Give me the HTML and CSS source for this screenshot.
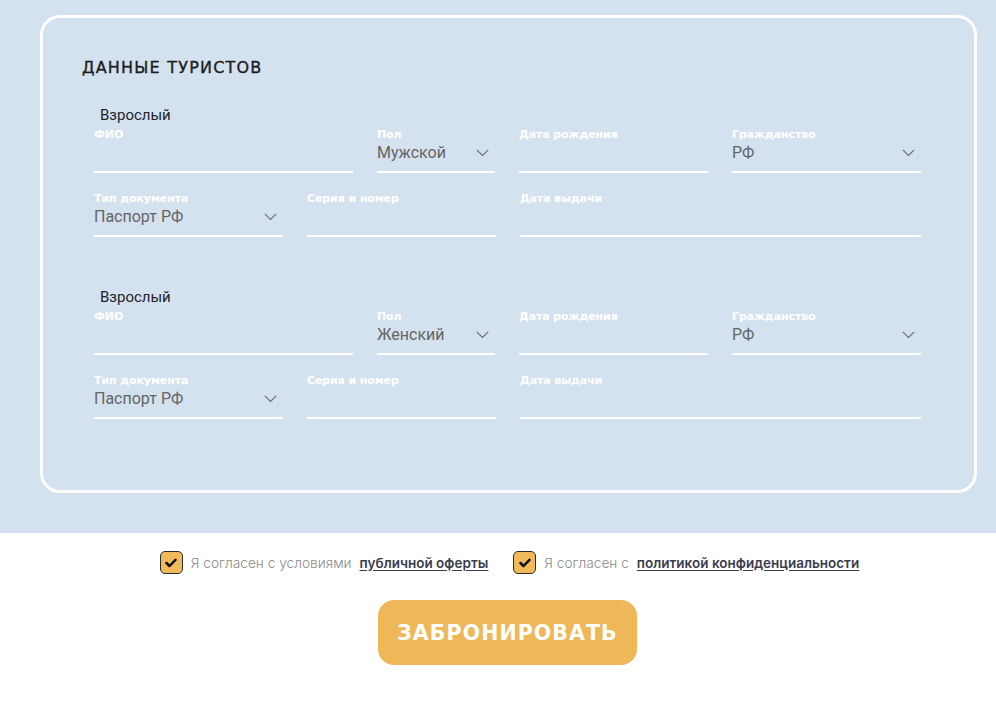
FILE: index.html
```html
<!DOCTYPE html>
<html lang="ru">
<head>
<meta charset="utf-8">
<title>Данные туристов</title>
<link rel="stylesheet" href="styles.css">
</head>
<body>
<div class="hero">
  <section class="card">
    <h2 class="title">ДАННЫЕ ТУРИСТОВ</h2>

    <div class="tourist">
      <div class="tourist-type">Взрослый</div>
      <div class="row row-a">
        <div class="field"><div class="label">ФИО</div><div class="value"></div></div>
        <div class="field"><div class="label">Пол</div><div class="value"><span>Мужской</span><svg class="chev" width="13" height="8" viewBox="0 0 13 8"><polyline points="0.8,0.8 6.5,6.5 12.2,0.8" fill="none" stroke="#6a6a6a" stroke-width="1.1"/></svg></div></div>
        <div class="field"><div class="label">Дата рождения</div><div class="value"></div></div>
        <div class="field"><div class="label">Гражданство</div><div class="value"><span>РФ</span><svg class="chev" width="13" height="8" viewBox="0 0 13 8"><polyline points="0.8,0.8 6.5,6.5 12.2,0.8" fill="none" stroke="#6a6a6a" stroke-width="1.1"/></svg></div></div>
      </div>
      <div class="row row-b">
        <div class="field"><div class="label">Тип документа</div><div class="value"><span>Паспорт РФ</span><svg class="chev" width="13" height="8" viewBox="0 0 13 8"><polyline points="0.8,0.8 6.5,6.5 12.2,0.8" fill="none" stroke="#6a6a6a" stroke-width="1.1"/></svg></div></div>
        <div class="field"><div class="label">Серия и номер</div><div class="value"></div></div>
        <div class="field"><div class="label">Дата выдачи</div><div class="value"></div></div>
      </div>
    </div>

    <div class="tourist">
      <div class="tourist-type">Взрослый</div>
      <div class="row row-a">
        <div class="field"><div class="label">ФИО</div><div class="value"></div></div>
        <div class="field"><div class="label">Пол</div><div class="value"><span>Женский</span><svg class="chev" width="13" height="8" viewBox="0 0 13 8"><polyline points="0.8,0.8 6.5,6.5 12.2,0.8" fill="none" stroke="#6a6a6a" stroke-width="1.1"/></svg></div></div>
        <div class="field"><div class="label">Дата рождения</div><div class="value"></div></div>
        <div class="field"><div class="label">Гражданство</div><div class="value"><span>РФ</span><svg class="chev" width="13" height="8" viewBox="0 0 13 8"><polyline points="0.8,0.8 6.5,6.5 12.2,0.8" fill="none" stroke="#6a6a6a" stroke-width="1.1"/></svg></div></div>
      </div>
      <div class="row row-b">
        <div class="field"><div class="label">Тип документа</div><div class="value"><span>Паспорт РФ</span><svg class="chev" width="13" height="8" viewBox="0 0 13 8"><polyline points="0.8,0.8 6.5,6.5 12.2,0.8" fill="none" stroke="#6a6a6a" stroke-width="1.1"/></svg></div></div>
        <div class="field"><div class="label">Серия и номер</div><div class="value"></div></div>
        <div class="field"><div class="label">Дата выдачи</div><div class="value"></div></div>
      </div>
    </div>
  </section>
</div>

<div class="bottom">
  <div class="agree">
    <label class="agree-item">
      <span class="checkbox"><svg width="12" height="10" viewBox="0 0 12 10"><polyline points="1.5,5 4.5,8 10.5,1.8" fill="none" stroke="#111" stroke-width="2.5" stroke-linecap="round" stroke-linejoin="round"/></svg></span>
      <span class="agree-text">Я согласен с условиями</span>
      <a class="agree-link" href="#">публичной оферты</a>
    </label>
    <label class="agree-item">
      <span class="checkbox"><svg width="12" height="10" viewBox="0 0 12 10"><polyline points="1.5,5 4.5,8 10.5,1.8" fill="none" stroke="#111" stroke-width="2.5" stroke-linecap="round" stroke-linejoin="round"/></svg></span>
      <span class="agree-text">Я согласен с</span>
      <a class="agree-link" href="#">политикой конфиденциальности</a>
    </label>
  </div>
  <div class="actions">
    <button class="book-btn" type="button">ЗАБРОНИРОВАТЬ</button>
  </div>
</div>
</body>
</html>
```

FILE: styles.css
```css
* { box-sizing: border-box; }

body {
  margin: 0;
  background: #ffffff;
  font-family: Roboto, "Liberation Sans", sans-serif;
}

.hero {
  background: #d4e2ef;
  padding: 15px 19px 40px 40px;
}

.card {
  width: 937px;
  border: 3px solid #ffffff;
  border-radius: 20px;
  padding: 41px 39px 71px 39px;
}

.title {
  margin: 0;
  font-family: "DejaVu Sans", sans-serif;
  font-weight: normal;
  font-size: 16px;
  line-height: 18px;
  letter-spacing: 1.2px;
  -webkit-text-stroke: 0.35px #1c1d22;
  color: #1c1d22;
}

.tourist {
  margin-left: 12px;
  width: 827px;
  margin-top: 51px;
}

.title + .tourist {
  margin-top: 29px;
}

.tourist-type {
  margin-left: 6px;
  margin-bottom: 4px;
  font-size: 15px;
  line-height: 18px;
  color: #222428;
}

.row {
  display: grid;
  column-gap: 24px;
}

.row-a { grid-template-columns: 259px 118px 189px 189px; }
.row-b { grid-template-columns: 189px 189px 1fr; margin-top: 19px; }

.field {
  border-bottom: 2px solid #ffffff;
  padding-bottom: 7px;
}

.label {
  font-family: "DejaVu Sans", sans-serif;
  font-weight: bold;
  font-size: 11px;
  line-height: 14px;
  color: #ffffff;
  letter-spacing: -0.1px;
}

.value {
  height: 22px;
  display: flex;
  align-items: center;
  justify-content: space-between;
  padding-right: 6px;
  font-size: 16px;
  line-height: 22px;
  color: #656565;
}

.chev { display: block; }

.bottom {
  padding-left: 19px;
}

.agree {
  display: flex;
  justify-content: center;
  gap: 25px;
  margin-top: 18px;
  padding-left: 4px;
}

.agree-item {
  display: flex;
  align-items: center;
  height: 23px;
}

.checkbox {
  width: 23px;
  height: 23px;
  border: 1px solid #2b2b2b;
  border-radius: 5px;
  background: #f0b95a;
  display: flex;
  align-items: center;
  justify-content: center;
  margin-right: 8px;
}

.agree-text {
  font-family: Inter, sans-serif;
  font-weight: 300;
  font-size: 13.7px;
  color: #8a8a8a;
  margin-right: 8px;
}

.agree-link {
  font-family: Inter, sans-serif;
  font-weight: 600;
  font-size: 13.5px;
  color: #3a3d4c;
  text-decoration: underline;
  text-underline-offset: 2px;
}

.actions {
  display: flex;
  justify-content: center;
  margin-top: 26px;
}

.book-btn {
  width: 259px;
  height: 65px;
  border: none;
  border-radius: 16px;
  background: #eeb858;
  color: #ffffff;
  font-family: "DejaVu Sans", sans-serif;
  font-weight: bold;
  font-size: 20.5px;
  letter-spacing: 1.1px;
  cursor: pointer;
}
```
